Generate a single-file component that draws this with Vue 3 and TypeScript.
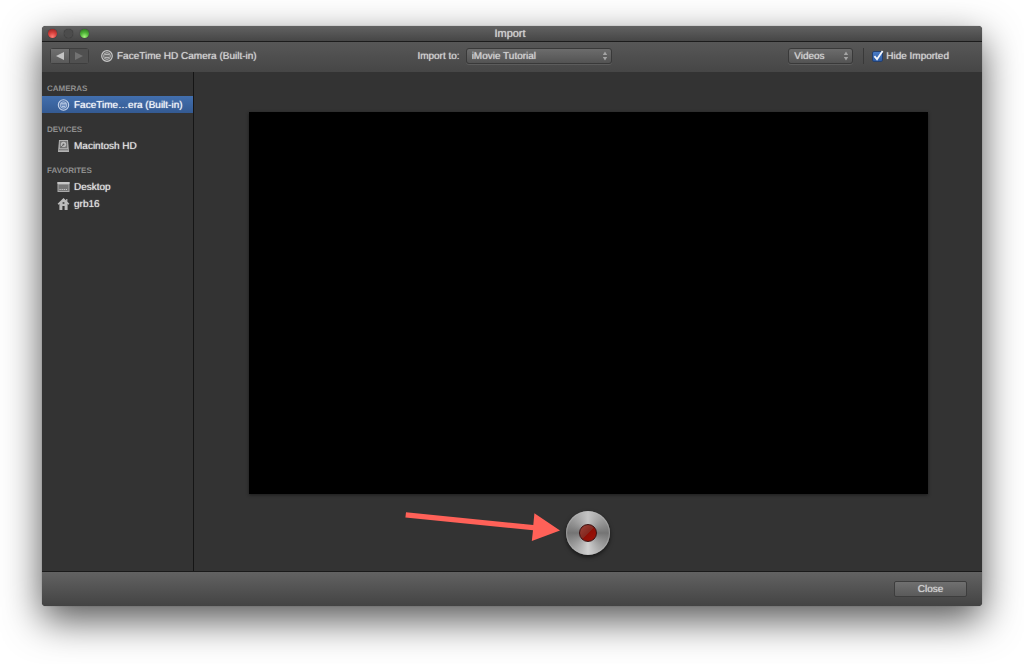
<script setup lang="ts">
import { ref } from 'vue'

interface SourceItem {
  id: string
  label: string
  icon: 'camera' | 'disk' | 'desktop' | 'home'
}

interface SourceGroup {
  title: string
  items: SourceItem[]
}

const groups: SourceGroup[] = [
  { title: 'CAMERAS', items: [{ id: 'facetime', label: 'FaceTime…era (Built-in)', icon: 'camera' }] },
  { title: 'DEVICES', items: [{ id: 'hd', label: 'Macintosh HD', icon: 'disk' }] },
  {
    title: 'FAVORITES',
    items: [
      { id: 'desktop', label: 'Desktop', icon: 'desktop' },
      { id: 'home', label: 'grb16', icon: 'home' },
    ],
  },
]

const selected = ref('facetime')
const target = ref('iMovie Tutorial')
const kind = ref('Videos')
const hideImported = ref(true)
</script>

<template>
  <div class="screen">
    <div class="window">
      <header class="titlebar">
        <div class="lights">
          <button class="light red" aria-label="Close window"></button>
          <button class="light off" aria-label="Minimize window" disabled></button>
          <button class="light green" aria-label="Zoom window"></button>
        </div>
        <h1 class="title">Import</h1>
      </header>

      <div class="toolbar">
        <div class="tool-left">
          <div class="nav">
            <button class="nav-btn" aria-label="Back">
              <svg width="10" height="8" viewBox="0 0 10 8"><path d="M9 0v8L1 4z" fill="#c4c4c4" /></svg>
            </button>
            <button class="nav-btn dim" aria-label="Forward" disabled>
              <svg width="10" height="8" viewBox="0 0 10 8"><path d="M1 0v8l8-4z" fill="#727272" /></svg>
            </button>
          </div>
          <svg class="cam" width="12" height="12" viewBox="0 0 12 12">
            <circle cx="6" cy="6" r="5.3" fill="#5a5a5a" stroke="#c6c6c6" stroke-width="1.2" />
            <circle cx="6" cy="6" r="3.4" fill="#6c6c6c" stroke="#b4b4b4" stroke-width="1" />
            <path d="M3.6 4.6h4.8M4 7.4h4" stroke="#c6c6c6" stroke-width=".9" />
          </svg>
          <span class="text">FaceTime HD Camera (Built-in)</span>
        </div>

        <div class="tool-mid">
          <label class="text" for="target">Import to:</label>
          <span class="popup wide">
            <select id="target" v-model="target">
              <option>iMovie Tutorial</option>
            </select>
            <svg class="arrows" width="6" height="10" viewBox="0 0 6 10">
              <path d="M3 0.5 5.2 4H.8zM3 9.5 5.2 6H.8z" fill="#a4a4a4" />
            </svg>
          </span>
        </div>

        <div class="tool-right">
          <span class="popup narrow">
            <select v-model="kind" aria-label="Media kind">
              <option>Videos</option>
            </select>
            <svg class="arrows" width="6" height="10" viewBox="0 0 6 10">
              <path d="M3 0.5 5.2 4H.8zM3 9.5 5.2 6H.8z" fill="#a4a4a4" />
            </svg>
          </span>
          <span class="rule"></span>
          <label class="check">
            <span class="check-box">
              <input v-model="hideImported" type="checkbox" />
              <svg v-if="hideImported" class="tick" width="12" height="12" viewBox="0 0 12 12">
                <path d="M2.4 6.2 5 9.2 10.6 1" fill="none" stroke="#f2f6fc" stroke-width="1.8" />
              </svg>
            </span>
            <span class="text">Hide Imported</span>
          </label>
        </div>
      </div>

      <div class="body">
        <nav class="sidebar">
          <section v-for="group in groups" :key="group.title" class="group">
            <h2>{{ group.title }}</h2>
            <button
              v-for="item in group.items"
              :key="item.id"
              class="source"
              :class="{ active: selected === item.id }"
              @click="selected = item.id"
            >
              <svg v-if="item.icon === 'camera'" width="13" height="12" viewBox="0 0 13 12">
                <circle cx="6.5" cy="6" r="5.2" fill="#4a6da3" stroke="#c3d2ea" stroke-width="1.1" />
                <circle cx="6.5" cy="6" r="3.3" fill="#6d8cbd" stroke="#b4c6e2" stroke-width=".9" />
                <path d="M4 4.8h5M5 7.4h3" stroke="#d2def0" stroke-width=".8" />
              </svg>
              <svg v-else-if="item.icon === 'disk'" width="13" height="12" viewBox="0 0 13 12">
                <path d="M2 0h9l1 12H1z" fill="#b2b2b2" />
                <rect x="2.8" y="1" width="7.4" height="7.2" fill="#777" />
                <circle cx="6.5" cy="4.4" r="2.7" fill="#bbb" />
                <circle cx="6.5" cy="4.4" r="1" fill="#666" />
                <path d="M6.5 4.4 3.8 7.6" stroke="#555" stroke-width=".8" />
                <path d="M2 9.8h9" stroke="#666" stroke-width=".9" />
              </svg>
              <svg v-else-if="item.icon === 'desktop'" width="13" height="12" viewBox="0 0 13 12">
                <rect x=".5" y="1" width="12" height="10" fill="#a9a9a9" />
                <rect x=".5" y="1" width="12" height="2" fill="#c6c6c6" />
                <rect x="1.5" y="3.6" width="10" height="6.4" fill="#767676" />
                <path d="M2.5 8.5h8" stroke="#c8c8c8" stroke-width="1.2" stroke-dasharray="1.2 .9" />
              </svg>
              <svg v-else width="13" height="12" viewBox="0 0 13 12">
                <path d="M6.5 0 .6 5.8l.8.9L2.4 6v6h3V8h2.2v4h3V6l1 .7.8-.9-2-2V1H9.2v1.5z" fill="#bcbcbc" />
                <rect x="5.6" y="4" width="1.8" height="2" fill="#555" />
              </svg>
              <span class="name">{{ item.label }}</span>
            </button>
          </section>
        </nav>

        <main class="stage">
          <div class="video"></div>
          <div class="controls">
            <button class="record" aria-label="Record"><span class="dot"></span></button>
            <svg class="pointer" width="156" height="30" viewBox="0 0 156 30">
              <path d="M1 .2 128.3 13.1 129.4 1.3 155 18.4 126.8 29 128 18.3.4 5.6z" fill="#ff6158" />
            </svg>
          </div>
        </main>
      </div>

      <footer class="footer">
        <button class="close">Close</button>
      </footer>
    </div>
  </div>
</template>

<style>
html,
body {
  background: #fff;
}
</style>

<style scoped>
* {
  box-sizing: border-box;
}
.screen {
  display: flex;
  min-height: 100vh;
  padding: 26px 42px 58px;
  font-family: "Liberation Sans", Arial, sans-serif;
  font-size: 10px;
  line-height: 12px;
  color: #d0d0d0;
  text-shadow: 0 0 1px currentColor;
  text-rendering: geometricPrecision;
}
button,
select {
  font: inherit;
  color: inherit;
  text-shadow: inherit;
  text-rendering: inherit;
  margin: 0;
  padding: 0;
  border: 0;
  background: none;
}
svg {
  display: block;
  flex: none;
}
.window {
  flex: 1;
  min-width: 0;
  display: flex;
  flex-direction: column;
  border-radius: 4px;
  overflow: hidden;
  background: #333;
  box-shadow: 0 14px 38px rgba(0, 0, 0, 0.67), 0 0 1px rgba(0, 0, 0, 0.5);
}
.titlebar {
  display: grid;
  grid-template-columns: 1fr auto 1fr;
  align-items: center;
  height: 16px;
  padding: 0 10px 0 6px;
  background: linear-gradient(#626262, #464646);
  border-bottom: 1px solid #1c1c1c;
}
.title {
  grid-column: 2;
  margin: 0;
  padding-top: 1px;
  font-size: 11px;
  font-weight: 400;
}
.lights {
  display: flex;
  gap: 7px;
}
.light {
  width: 9px;
  height: 9px;
  border-radius: 50%;
  box-shadow: 0 0 1px #222;
}
.red {
  background: radial-gradient(circle at 50% 85%, #ff7d75, #d8423e 45%, #8c1b1b);
}
.off {
  background: #4c4c4c;
}
.green {
  background: radial-gradient(circle at 50% 85%, #a4f47c, #51b53a 45%, #236818);
}
.toolbar {
  display: flex;
  align-items: center;
  height: 30px;
  padding: 0 33px 2px 8px;
  background: linear-gradient(#575757, #464646);
}
.text {
  padding-top: 2px;
}
.tool-left,
.tool-right {
  flex: 1;
  display: flex;
  align-items: center;
}
.tool-right {
  justify-content: flex-end;
}
.tool-mid {
  display: flex;
  align-items: center;
  gap: 6px;
  margin-left: 30px;
}
.nav {
  display: flex;
  height: 16px;
  border: 1px solid #3e3e3e;
  border-radius: 3px;
}
.nav-btn {
  width: 19px;
  display: flex;
  align-items: center;
  justify-content: center;
  background: linear-gradient(#707070, #5a5a5a);
  border-right: 1px solid #3e3e3e;
}
.nav-btn.dim {
  width: 18px;
  background: #505050;
  border-right: 0;
}
.cam {
  margin: 0 4px 0 12px;
}
.popup {
  position: relative;
  display: block;
}
.popup select {
  display: block;
  width: 100%;
  height: 16px;
  padding: 1px 16px 0 5px;
  appearance: none;
  border: 1px solid #393939;
  border-radius: 3px;
  background: linear-gradient(#6c6c6c, #535353);
  box-shadow: 0 1px 0 #5c5c5c;
}
.wide {
  width: 146px;
}
.narrow {
  width: 65px;
}
.arrows {
  position: absolute;
  top: 3px;
  right: 4px;
  pointer-events: none;
}
.rule {
  width: 1px;
  height: 16px;
  margin: 0 8px 0 10px;
  background: #393939;
}
.check {
  display: flex;
  align-items: center;
  gap: 3px;
}
.check-box {
  position: relative;
  display: block;
  width: 11px;
  height: 11px;
}
.check-box input {
  display: block;
  width: 11px;
  height: 11px;
  margin: 0;
  appearance: none;
  border: 1px solid #24406e;
  border-radius: 2px;
  background: linear-gradient(#4a7cc6, #2d5ca6);
}
.tick {
  position: absolute;
  top: -1px;
  left: 0;
  pointer-events: none;
}
.body {
  flex: 1;
  display: flex;
}
.sidebar {
  flex: none;
  width: 152px;
  padding-top: 8px;
  border-right: 1px solid #151515;
}
.group {
  margin-bottom: 8px;
}
.group h2 {
  margin: 0;
  padding: 3px 5px 1px;
  font-size: 8px;
  line-height: 12px;
  font-weight: 700;
  color: #8f8f8f;
  text-shadow: none;
}
.source {
  display: flex;
  align-items: center;
  gap: 4px;
  width: 100%;
  height: 17px;
  padding-left: 15px;
  white-space: nowrap;
  color: #dedede;
}
.name {
  padding-top: 3px;
}
.source.active {
  background: linear-gradient(#426fae, #345a92);
  color: #f0f3f8;
}
.stage {
  flex: 1;
  min-width: 0;
  padding: 40px 54px 16px 55px;
}
.video {
  aspect-ratio: 16 / 9;
  background: #000;
  box-shadow: 0 1px 3px #1c1c1c;
}
.controls {
  position: relative;
  display: flex;
  justify-content: center;
  padding: 17px 1px 0 0;
}
.record {
  width: 44px;
  height: 44px;
  display: flex;
  align-items: center;
  justify-content: center;
  border-radius: 50%;
  background: conic-gradient(#c4c4c4, #a2a2a2 40deg, #747474 90deg, #9c9c9c 130deg, #d0d0d0 180deg, #9c9c9c 230deg, #747474 270deg, #a2a2a2 320deg, #c4c4c4);
  box-shadow: 0 2px 4px rgba(0, 0, 0, 0.6), inset 0 0 1px 1px rgba(190, 190, 190, 0.5);
}
.dot {
  width: 18px;
  height: 18px;
  border: 1px solid #3c1010;
  border-radius: 50%;
  background: linear-gradient(135deg, #9c4339, #84281f 50%, #8e0e05 51%, #a01208);
}
.pointer {
  position: absolute;
  top: 18px;
  right: calc(50% + 28px);
  pointer-events: none;
}
.footer {
  display: flex;
  align-items: center;
  justify-content: flex-end;
  height: 35px;
  padding: 0 15px;
  border-top: 1px solid #1a1a1a;
  background: linear-gradient(#626262, #434343);
}
.close {
  width: 73px;
  height: 16px;
  padding-top: 1px;
  border: 1px solid #3d3d3d;
  border-radius: 2px;
  background: linear-gradient(#707070, #5a5a5a);
}
</style>
